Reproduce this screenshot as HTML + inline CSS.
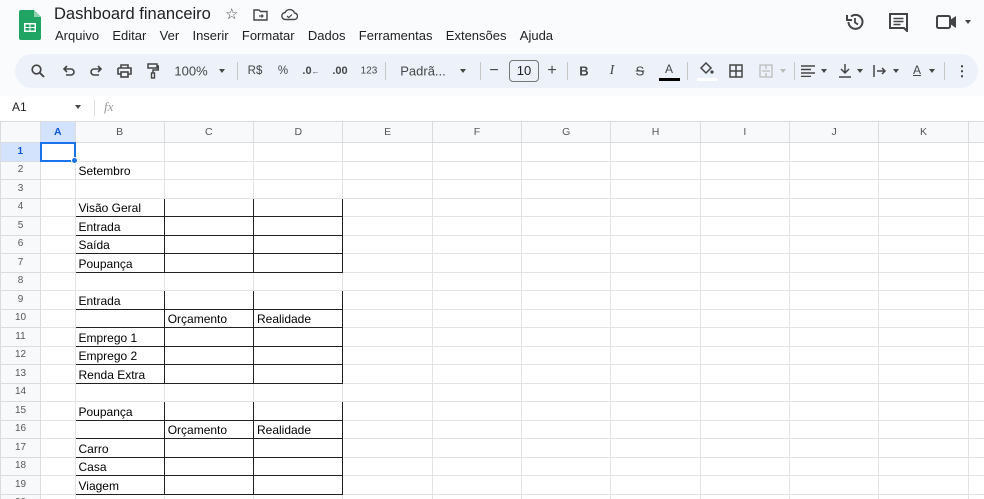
<!DOCTYPE html>
<html><head><meta charset="utf-8"><style>
*{margin:0;padding:0;box-sizing:border-box}
body{width:984px;height:499px;overflow:hidden;background:#f9fbfd;font-family:"Liberation Sans",Arial,sans-serif;position:relative;color:#1f1f1f}
.a{position:absolute;white-space:nowrap}
.menu span{margin-right:13.3px}
.tb{position:absolute;left:15px;top:54px;width:963px;height:34px;background:#edf2fa;border-radius:17px}
.t{position:absolute;top:71px;transform:translate(-50%,-50%);font-size:12px;color:#444746;white-space:nowrap}
.sep{position:absolute;top:62px;width:1px;height:18px;background:#c7c7c7}
.car{position:absolute;top:69px;width:0;height:0;border-left:3.5px solid transparent;border-right:3.5px solid transparent;border-top:4px solid #444746}
svg.i{position:absolute}
.grid{position:absolute;left:0;top:121px;background:#fff;width:984px;height:378px;overflow:hidden}
table{border-collapse:collapse;table-layout:fixed;position:absolute;left:0;top:0;width:998px}
td{height:18.5px;border:1px solid #e2e3e3;font-size:12px;color:#000;padding:0 3px;white-space:nowrap;overflow:hidden;line-height:16px;vertical-align:bottom}
tr.h td{height:21px;background:#f8f9fa;color:#575757;font-size:10.5px;text-align:center;vertical-align:middle;border-color:#dadce0}
td.r{background:#f8f9fa;color:#575757;font-size:10px;text-align:center;vertical-align:middle;border-color:#dadce0;padding:0}
td.k{border-color:#222 !important}
</style></head><body>
<svg class="i" style="left:19px;top:10px" width="22" height="30" viewBox="0 0 22 30"><path d="M2 0h13l7 7v21a2 2 0 0 1-2 2H2a2 2 0 0 1-2-2V2a2 2 0 0 1 2-2z" fill="#1fa463"/><path d="M15 0v7h7z" fill="#8ed1b1"/><rect x="5" y="13" width="12" height="9" fill="#fff"/><rect x="6.5" y="14.5" width="4" height="2.5" fill="#1fa463"/><rect x="11.5" y="14.5" width="4" height="2.5" fill="#1fa463"/><rect x="6.5" y="18" width="4" height="2.5" fill="#1fa463"/><rect x="11.5" y="18" width="4" height="2.5" fill="#1fa463"/></svg>
<div class="a" style="left:54px;top:5px;font-size:16.5px;color:#1f1f1f">Dashboard financeiro</div>
<div class="a" style="left:225px;top:5px;font-size:15px;color:#444">☆</div>
<svg class="i" style="left:253px;top:9px" width="15" height="12" viewBox="0 0 15 12"><path d="M1 1h5l1.5 1.5H14V11H1z" fill="none" stroke="#444" stroke-width="1.4"/><path d="M6 7h4M8.5 5.5L10 7 8.5 8.5" stroke="#444" stroke-width="1.2" fill="none"/></svg>
<svg class="i" style="left:281px;top:8px" width="17" height="13" viewBox="0 0 17 13"><path d="M4.5 11.5a3.5 3.5 0 0 1-.3-7A5 5 0 0 1 13.5 5a3 3 0 0 1-.5 6.5z" fill="none" stroke="#444" stroke-width="1.4"/><path d="M6 8l1.8 1.6L11 6.5" stroke="#444" stroke-width="1.2" fill="none"/></svg>
<div class="a menu" style="left:55px;top:28px;font-size:13px;color:#1f1f1f"><span>Arquivo</span><span>Editar</span><span>Ver</span><span>Inserir</span><span>Formatar</span><span>Dados</span><span>Ferramentas</span><span>Extensões</span><span>Ajuda</span></div>
<svg class="i" style="left:845px;top:12px" width="20" height="20" viewBox="0 0 20 20"><path d="M3.5 10A7 7 0 1 0 6 4.5" fill="none" stroke="#444" stroke-width="2"/><path d="M2 3v5h5" fill="none" stroke="#444" stroke-width="2"/><path d="M10 6v4.5l3 2" fill="none" stroke="#444" stroke-width="1.8"/></svg>
<svg class="i" style="left:889px;top:13px" width="19" height="19" viewBox="0 0 19 19"><path d="M1 1h17v17l-3-3H1z" fill="none" stroke="#444" stroke-width="2"/><path d="M4.5 5.5h10M4.5 8.5h10M4.5 11.5h7" stroke="#444" stroke-width="1.5"/></svg>
<svg class="i" style="left:936px;top:14px" width="22" height="16" viewBox="0 0 22 16"><rect x="1" y="2" width="13" height="12" rx="1.5" fill="none" stroke="#444" stroke-width="2"/><path d="M14 6l6-4v12l-6-4z" fill="#444"/></svg>
<div class="car" style="left:965px;top:20px"></div>
<div class="tb"></div>
<svg class="i" style="left:31px;top:64px" width="14" height="14" viewBox="0 0 14 14"><circle cx="5.5" cy="5.5" r="4.3" fill="none" stroke="#444" stroke-width="1.7"/><path d="M8.7 8.7L13 13" stroke="#444" stroke-width="1.9"/></svg>
<svg class="i" style="left:62px;top:65px" width="13" height="12" viewBox="0 0 13 12"><path d="M3 4h6a3 3 0 0 1 0 6H4M5 1L2 4l3 3" fill="none" stroke="#444" stroke-width="1.6"/></svg>
<svg class="i" style="left:90px;top:65px" width="13" height="12" viewBox="0 0 13 12"><path d="M10 4H4a3 3 0 0 0 0 6h5M8 1l3 3-3 3" fill="none" stroke="#444" stroke-width="1.6"/></svg>
<svg class="i" style="left:117px;top:64px" width="15" height="14" viewBox="0 0 15 14"><path d="M4 4V1h7v3M1 4h13v6h-3M4 10H1V4" fill="none" stroke="#444" stroke-width="1.6"/><rect x="4" y="8" width="7" height="5" fill="none" stroke="#444" stroke-width="1.6"/></svg>
<svg class="i" style="left:147px;top:63px" width="12" height="16" viewBox="0 0 12 16"><path d="M1 1h9v4H1zM10 3h1.5v4H6v3" fill="none" stroke="#444" stroke-width="1.5"/><rect x="4.5" y="10" width="3" height="5" fill="none" stroke="#444" stroke-width="1.4"/></svg>
<div class="t" style="left:191px;font-size:13px">100%</div>
<div class="car" style="left:219px"></div>
<div class="sep" style="left:237px"></div>
<div class="t" style="left:255px;font-size:11.5px">R$</div>
<div class="t" style="left:283px;font-size:11.5px">%</div>
<div class="t" style="left:311px;font-size:11px;font-weight:bold">.0<span style="font-size:8px">←</span></div>
<div class="t" style="left:340px;font-size:11px;font-weight:bold">.00</div>
<div class="t" style="left:369px;font-size:10px">123</div>
<div class="sep" style="left:385px"></div>
<div class="t" style="left:423px;font-size:13px">Padrã...</div>
<div class="car" style="left:460px"></div>
<div class="sep" style="left:480px"></div>
<div class="t" style="left:494px;font-size:16px">−</div>
<div class="a" style="left:509px;top:60px;width:30px;height:22px;border:1px solid #747775;border-radius:4px;font-size:13px;text-align:center;line-height:20px;color:#1f1f1f">10</div>
<div class="t" style="left:552px;font-size:16px">+</div>
<div class="sep" style="left:567px"></div>
<div class="t" style="left:584px;font-size:13px;font-weight:bold">B</div>
<div class="t" style="left:612px;font-size:14px;font-style:italic;font-family:'Liberation Serif',serif">I</div>
<div class="t" style="left:640px;font-size:13px;text-decoration:line-through">S</div>
<div class="t" style="left:669px;top:69px;font-size:12px">A</div>
<div class="a" style="left:659px;top:78px;width:21px;height:3px;background:#000"></div>
<div class="sep" style="left:687px"></div>
<svg class="i" style="left:698px;top:62px" width="16" height="13" viewBox="0 0 16 13"><path d="M3 6l5-5 5 5-5 5z" fill="none" stroke="#444" stroke-width="1.5"/><circle cx="14" cy="10" r="1.6" fill="#444"/></svg>
<div class="a" style="left:697px;top:78px;width:20px;height:3px;background:#fff"></div>
<svg class="i" style="left:729px;top:64px" width="14" height="14" viewBox="0 0 14 14"><path d="M1 1h12v12H1zM7 1v12M1 7h12" fill="none" stroke="#444" stroke-width="1.5"/></svg>
<svg class="i" style="left:759px;top:64px" width="14" height="14" viewBox="0 0 14 14"><path d="M1 1h12v12H1zM7 1v4M7 9v4M3 7h8" fill="none" stroke="#bbb" stroke-width="1.3"/></svg>
<div class="car" style="left:780px;border-top-color:#bbb"></div>
<div class="sep" style="left:794px"></div>
<svg class="i" style="left:801px;top:65px" width="14" height="12" viewBox="0 0 14 12"><path d="M0 1h14M0 4.5h10M0 8h14M0 11.5h10" stroke="#444" stroke-width="1.5"/></svg>
<div class="car" style="left:821px"></div>
<svg class="i" style="left:839px;top:64px" width="12" height="14" viewBox="0 0 12 14"><path d="M6 0v9M2 5l4 4 4-4M0 13h12" fill="none" stroke="#444" stroke-width="1.5"/></svg>
<div class="car" style="left:857px"></div>
<svg class="i" style="left:873px;top:64px" width="14" height="14" viewBox="0 0 14 14"><path d="M1 1v12M4 7h8M9 4l3 3-3 3" fill="none" stroke="#444" stroke-width="1.5"/></svg>
<div class="car" style="left:893px"></div>
<div class="t" style="left:917px;top:70px;font-size:12px;text-decoration:underline">A</div>
<div class="car" style="left:929px"></div>
<div class="sep" style="left:944px"></div>
<div class="t" style="left:962px;font-size:14px;font-weight:bold">⋮</div>
<div class="a" style="left:0;top:96px;width:984px;height:25px;background:#fff"></div>
<div class="a" style="left:12px;top:100px;font-size:12px;color:#1f1f1f">A1</div>
<div class="car" style="left:75px;top:105px"></div>
<div class="a" style="left:94px;top:100px;width:1px;height:16px;background:#dadce0"></div>
<div class="a" style="left:104px;top:99px;font-size:13px;font-style:italic;font-family:'Liberation Serif',serif;color:#999">fx</div>
<div class="grid">
<table>
<colgroup><col style="width:40px"><col style="width:34.5px"><col style="width:89.2px"><col style="width:89.3px"><col style="width:89.5px"><col style="width:89.3px"><col style="width:89.3px"><col style="width:89.3px"><col style="width:89.3px"><col style="width:89.3px"><col style="width:89.3px"><col style="width:89.5px"><col style="width:30.2px"></colgroup>
<tr class="h"><td></td><td style="background:#d3e3fd;color:#0b57d0;font-weight:bold">A</td><td>B</td><td>C</td><td>D</td><td>E</td><td>F</td><td>G</td><td>H</td><td>I</td><td>J</td><td>K</td><td></td></tr>
<tr><td class="r" style="background:#d3e3fd;color:#0b57d0;font-weight:bold">1</td><td style="border:2px solid #1a73e8"></td><td></td><td></td><td></td><td></td><td></td><td></td><td></td><td></td><td></td><td></td><td></td></tr>
<tr><td class="r">2</td><td></td><td>Setembro</td><td></td><td></td><td></td><td></td><td></td><td></td><td></td><td></td><td></td><td></td></tr>
<tr><td class="r">3</td><td></td><td></td><td></td><td></td><td></td><td></td><td></td><td></td><td></td><td></td><td></td><td></td></tr>
<tr><td class="r">4</td><td></td><td class="k">Visão Geral</td><td class="k"></td><td class="k"></td><td></td><td></td><td></td><td></td><td></td><td></td><td></td><td></td></tr>
<tr><td class="r">5</td><td></td><td class="k">Entrada</td><td class="k"></td><td class="k"></td><td></td><td></td><td></td><td></td><td></td><td></td><td></td><td></td></tr>
<tr><td class="r">6</td><td></td><td class="k">Saída</td><td class="k"></td><td class="k"></td><td></td><td></td><td></td><td></td><td></td><td></td><td></td><td></td></tr>
<tr><td class="r">7</td><td></td><td class="k">Poupança</td><td class="k"></td><td class="k"></td><td></td><td></td><td></td><td></td><td></td><td></td><td></td><td></td></tr>
<tr><td class="r">8</td><td></td><td></td><td></td><td></td><td></td><td></td><td></td><td></td><td></td><td></td><td></td><td></td></tr>
<tr><td class="r">9</td><td></td><td class="k">Entrada</td><td class="k"></td><td class="k"></td><td></td><td></td><td></td><td></td><td></td><td></td><td></td><td></td></tr>
<tr><td class="r">10</td><td></td><td class="k"></td><td class="k">Orçamento</td><td class="k">Realidade</td><td></td><td></td><td></td><td></td><td></td><td></td><td></td><td></td></tr>
<tr><td class="r">11</td><td></td><td class="k">Emprego 1</td><td class="k"></td><td class="k"></td><td></td><td></td><td></td><td></td><td></td><td></td><td></td><td></td></tr>
<tr><td class="r">12</td><td></td><td class="k">Emprego 2</td><td class="k"></td><td class="k"></td><td></td><td></td><td></td><td></td><td></td><td></td><td></td><td></td></tr>
<tr><td class="r">13</td><td></td><td class="k">Renda Extra</td><td class="k"></td><td class="k"></td><td></td><td></td><td></td><td></td><td></td><td></td><td></td><td></td></tr>
<tr><td class="r">14</td><td></td><td></td><td></td><td></td><td></td><td></td><td></td><td></td><td></td><td></td><td></td><td></td></tr>
<tr><td class="r">15</td><td></td><td class="k">Poupança</td><td class="k"></td><td class="k"></td><td></td><td></td><td></td><td></td><td></td><td></td><td></td><td></td></tr>
<tr><td class="r">16</td><td></td><td class="k"></td><td class="k">Orçamento</td><td class="k">Realidade</td><td></td><td></td><td></td><td></td><td></td><td></td><td></td><td></td></tr>
<tr><td class="r">17</td><td></td><td class="k">Carro</td><td class="k"></td><td class="k"></td><td></td><td></td><td></td><td></td><td></td><td></td><td></td><td></td></tr>
<tr><td class="r">18</td><td></td><td class="k">Casa</td><td class="k"></td><td class="k"></td><td></td><td></td><td></td><td></td><td></td><td></td><td></td><td></td></tr>
<tr><td class="r">19</td><td></td><td class="k">Viagem</td><td class="k"></td><td class="k"></td><td></td><td></td><td></td><td></td><td></td><td></td><td></td><td></td></tr>
<tr><td class="r">20</td><td></td><td></td><td></td><td></td><td></td><td></td><td></td><td></td><td></td><td></td><td></td><td></td></tr>
</table>
<div class="a" style="left:71px;top:36px;width:7px;height:7px;border-radius:50%;background:#1a73e8;border:1px solid #fff"></div>
</div>
</body></html>
